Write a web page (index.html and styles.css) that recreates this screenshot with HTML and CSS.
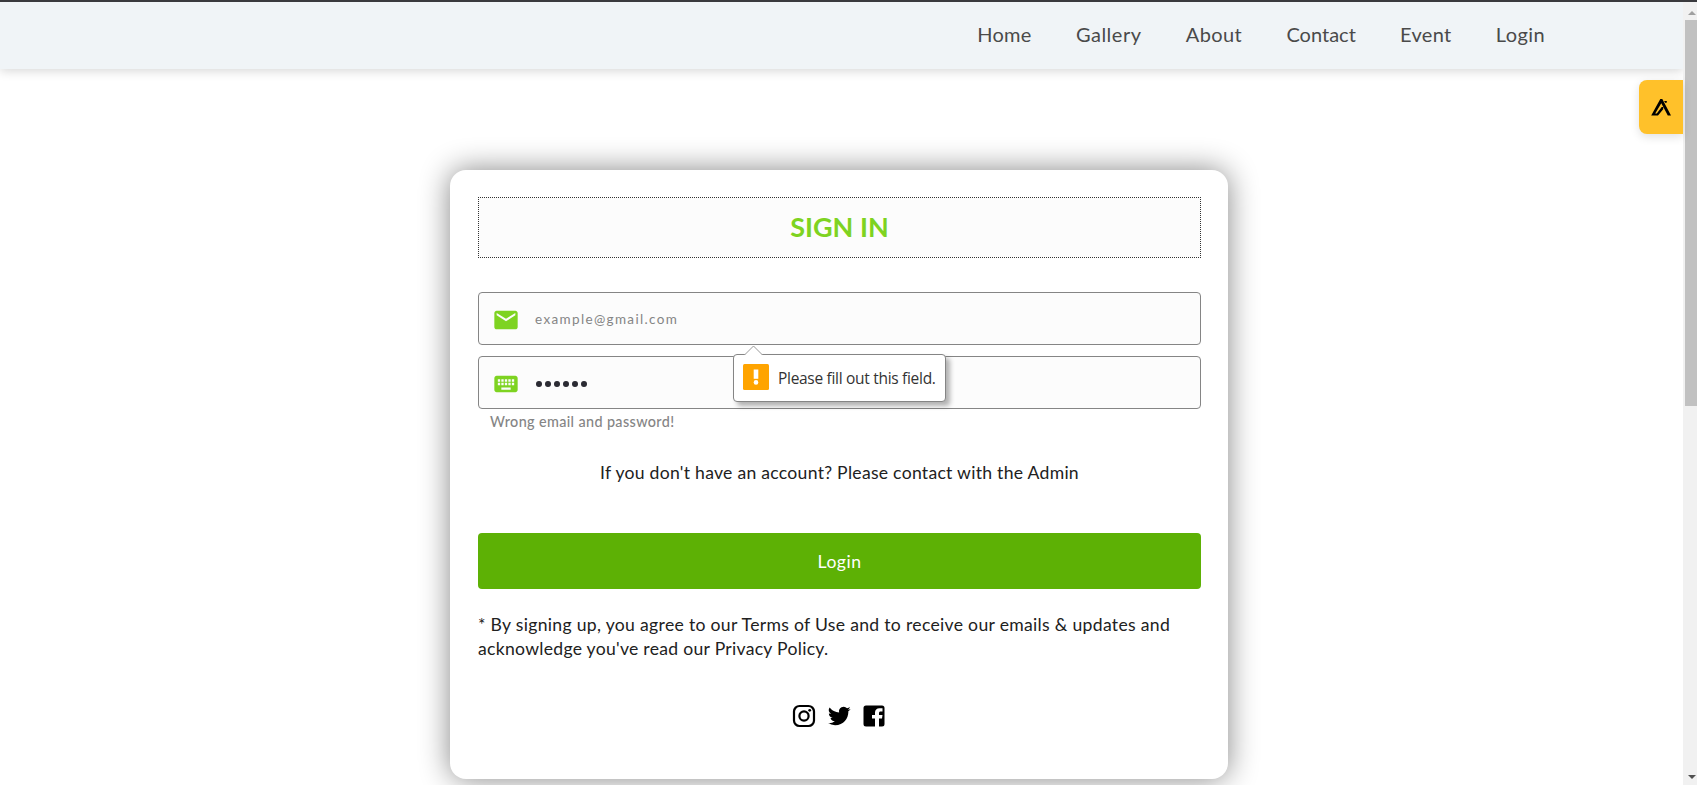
FILE: index.html
```html
<!DOCTYPE html>
<html lang="en">
<head>
<meta charset="utf-8">
<title>Sign in</title>
<link rel="stylesheet" href="styles.css">
</head>
<body>
<div class="page">
  <header class="header">
    <nav class="nav">
      <a class="home">Home</a><a class="gallery">Gallery</a><a class="about">About</a><a class="contact">Contact</a><a class="event">Event</a><a class="login">Login</a>
    </nav>
  </header>
  <main class="main">
    <section class="card">
      <h1 class="title"><span>SIGN IN</span></h1>
      <form class="form">
        <div class="field">
          <svg class="field-icon" viewBox="0 0 24 24"><path d="M20 4H4c-1.100 0-1.990.9-1.990 2L2 18c0 1.100.9 2 2 2h16c1.100 0 2-.9 2-2V6c0-1.100-.9-2-2-2zm0 4l-8 5-8-5V6l8 5 8-5v2z"/></svg>
          <span class="placeholder">example@gmail.com</span>
          <div class="tooltip">
            <svg class="tip-arrow" viewBox="0 0 20 11"><path d="M0 10.500L9.500 1L19 10.500V11H0z" fill="#fff"/><path d="M.5 10L9.500 1L18.500 10" fill="none" stroke="#999"/></svg>
            <svg class="tip-icon" viewBox="0 0 26 26"><rect width="26" height="26" rx="1.500" fill="#ffa400"/><path d="M10.700 5.500h4.600v9.300h-4.600z" fill="#fff"/><circle cx="13" cy="18.400" r="2.300" fill="#fff"/></svg>
            <span class="tip-text">Please fill out this field.</span>
          </div>
        </div>
        <div class="field">
          <svg class="field-icon" viewBox="0 0 24 24"><path d="M20 5H4c-1.100 0-1.990.9-1.990 2L2 17c0 1.100.9 2 2 2h16c1.100 0 2-.9 2-2V7c0-1.100-.9-2-2-2zm-9 3h2v2h-2V8zm0 3h2v2h-2v-2zM8 8h2v2H8V8zm0 3h2v2H8v-2zm-1 2H5v-2h2v2zm0-3H5V8h2v2zm9 7H8v-2h8v2zm0-4h-2v-2h2v2zm0-3h-2V8h2v2zm3 3h-2v-2h2v2zm0-3h-2V8h2v2z"/></svg>
          <span class="dots"><i></i><i></i><i></i><i></i><i></i><i></i></span>
        </div>
        <p class="error">Wrong email and password!</p>
        <p class="hint">If you don't have an account? Please contact with the Admin</p>
        <div class="submit"><span>Login</span></div>
      </form>
      <p class="terms"><span class="line1">* By signing up, you agree to our Terms of Use and to receive our emails &amp; updates and</span><br><span class="line2">acknowledge you've read our Privacy Policy.</span></p>
      <div class="social">
        <svg viewBox="0 0 24 24"><g fill="none" stroke="#000" stroke-width="2.200"><rect x="2" y="2" width="20" height="20" rx="5.500"/><circle cx="12" cy="12" r="4.600"/></g><circle cx="17.700" cy="6.300" r="1.400"/></svg>
        <svg viewBox="0 0 24 24"><path d="M23.640 4.940c-.83.370-1.730.62-2.670.73a4.660 4.660 0 0 0 2.040-2.570c-.9.530-1.890.92-2.950 1.130a4.650 4.650 0 0 0-7.920 4.240A13.190 13.190 0 0 1 2.560 3.610a4.650 4.650 0 0 0 1.440 6.210 4.630 4.630 0 0 1-2.110-.58v.06a4.650 4.650 0 0 0 3.730 4.560 4.660 4.660 0 0 1-2.100.08 4.650 4.650 0 0 0 4.340 3.230A9.330 9.330 0 0 1 .97 19.100a13.160 13.160 0 0 0 7.130 2.090c8.560 0 13.240-7.090 13.240-13.240l-.02-.6a9.460 9.460 0 0 0 2.320-2.410z"/></svg>
        <svg viewBox="0 0 24 24"><path fill-rule="evenodd" d="M4 1.500h16A2.500 2.500 0 0 1 22.500 4v16a2.500 2.500 0 0 1-2.500 2.500h-3v-8h3l.5-3.500H17V9.300c0-1.200.5-1.800 1.700-1.800H20.500V4.200H17.500C14.700 4.200 13 5.900 13 8.600V11h-3v3.500h3v8H4A2.500 2.500 0 0 1 1.500 20V4A2.500 2.500 0 0 1 4 1.500z"/></svg>
      </div>
    </section>
  </main>
</div>
<aside class="widget">
  <svg viewBox="0 0 20 17"><path d="M9.300 0h2L20 16.500h-3.200L10.300 4.200 4.200 14.500h1.600L10.700 8h1.500v2.200L7 16.500H.2z"/><path d="M13 2h2.800v1.500L14.500 4z"/></svg>
</aside>
<div class="scrollbar">
  <svg class="arrow up" viewBox="0 0 8 4"><path d="M0 4L4 0l4 4z"/></svg>
  <div class="thumb"></div>
  <svg class="arrow down" viewBox="0 0 8 4"><path d="M0 0L4 4l4-4z"/></svg>
</div>
</body>
</html>
```

FILE: styles.css
```css
* { box-sizing: border-box; }
body {
  margin: 0;
  height: 785px;
  overflow: hidden;
  display: flex;
  position: relative;
  background: #fff;
  border-top: 2px solid #3a3a3e;
  font-family: Lato, "Open Sans", sans-serif;
  color: #212121;
}
h1, p { margin: 0; font-weight: 400; }
.page { flex: 1; }
.header {
  height: 67px;
  background: #f0f4f7;
  box-shadow: 0 2px 10px rgba(0, 0, 0, .16);
  display: flex;
  justify-content: flex-end;
}
.nav {
  display: flex;
  gap: 44.300px;
  padding: 18px 138px 0 0;
  font-size: 20px;
  line-height: 28px;
  color: #4a4a4a;
}
.home { letter-spacing: .25px; }
.gallery { letter-spacing: .5px; }
.about { letter-spacing: .4px; }
.event { letter-spacing: .3px; }
.login { letter-spacing: .4px; }
.main { display: flex; padding: 101px 0 0 450px; }
.card {
  width: 778px;
  height: 609px;
  padding: 27px 27px 0 28px;
  border-radius: 16px;
  background: #fff;
  box-shadow: 0 0 30px rgba(0, 0, 0, .48);
}
.title {
  height: 61px;
  padding-bottom: 2px;
  display: flex;
  align-items: center;
  justify-content: center;
  border: 1px dotted #333;
  background: #fcfcfc;
  color: #7ed321;
  font-size: 27px;
  font-weight: 700;
}
.form { display: flex; flex-direction: column; padding-top: 34px; }
.field {
  position: relative;
  height: 53px;
  margin-bottom: 11px;
  padding-left: 13px;
  display: flex;
  align-items: center;
  gap: 15px;
  border: 1px solid #858585;
  border-radius: 4px;
  background: #fcfcfc;
}
.field-icon { width: 28px; height: 28px; margin-top: 2px; fill: #7ed321; }
.placeholder { font-size: 13.500px; letter-spacing: 1.350px; color: #858585; }
.dots { display: flex; gap: 3.200px; padding: 3px 0 0 1px; }
.dots i { width: 5.800px; height: 5.800px; border-radius: 50%; background: #2b2b33; }
.tooltip {
  position: absolute;
  z-index: 2;
  left: 254px;
  top: 61px;
  width: 213px;
  height: 48px;
  padding: 0 0 0 9px;
  display: flex;
  align-items: center;
  gap: 9px;
  background: #fff;
  border: 1px solid #858585;
  border-radius: 4px;
  box-shadow: 4px 4px 5px rgba(0, 0, 0, .3);
}
.tip-arrow { position: absolute; left: 10px; top: -10px; width: 20px; height: 11px; }
.tip-icon { flex: none; width: 26px; height: 26px; margin-top: -3px; }
.tip-text { font: 15.500px "Open Sans", sans-serif; letter-spacing: -.3px; white-space: nowrap; color: #333; }
.error {
  margin-top: -8px;
  padding-left: 12px;
  font-size: 14.400px;
  letter-spacing: .37px;
  font-weight: 500;
  line-height: 20px;
  color: #858585;
}
.hint { margin-top: 29px; text-align: center; font-size: 17.600px; letter-spacing: .27px; line-height: 24px; white-space: nowrap; }
.submit {
  height: 56px;
  margin-top: 48px;
  display: flex;
  align-items: center;
  justify-content: center;
  border-radius: 4px;
  background: #5db105;
  color: #fff;
  font-size: 17.600px;
  letter-spacing: .5px;
}
.terms { margin-top: 24px; font-size: 17.600px; line-height: 24px; white-space: nowrap; }
.line1 { letter-spacing: .306px; }
.line2 { letter-spacing: .28px; }
.social { display: flex; justify-content: center; gap: 11px; padding-right: 2px; margin-top: 43px; }
.social svg { width: 24px; height: 24px; }
.widget {
  position: absolute;
  left: 1639px;
  top: 78px;
  width: 44px;
  height: 54px;
  display: flex;
  align-items: center;
  justify-content: center;
  border-radius: 8px 0 0 8px;
  background: #ffc12a;
  box-shadow: 0 3px 10px rgba(0, 0, 0, .12);
}
.widget svg { width: 20px; height: 17px; }
.scrollbar {
  width: 14px;
  background: #f1f1f1;
  display: flex;
  flex-direction: column;
  align-items: flex-end;
}
.arrow { width: 8px; height: 4px; margin-right: 1px; }
.up { margin-top: 9px; fill: #a0a0a0; }
.thumb { width: 12px; height: 386px; margin-top: 5px; background: #c1c1c1; }
.down { margin-top: auto; margin-bottom: 6px; fill: #505050; }
```
